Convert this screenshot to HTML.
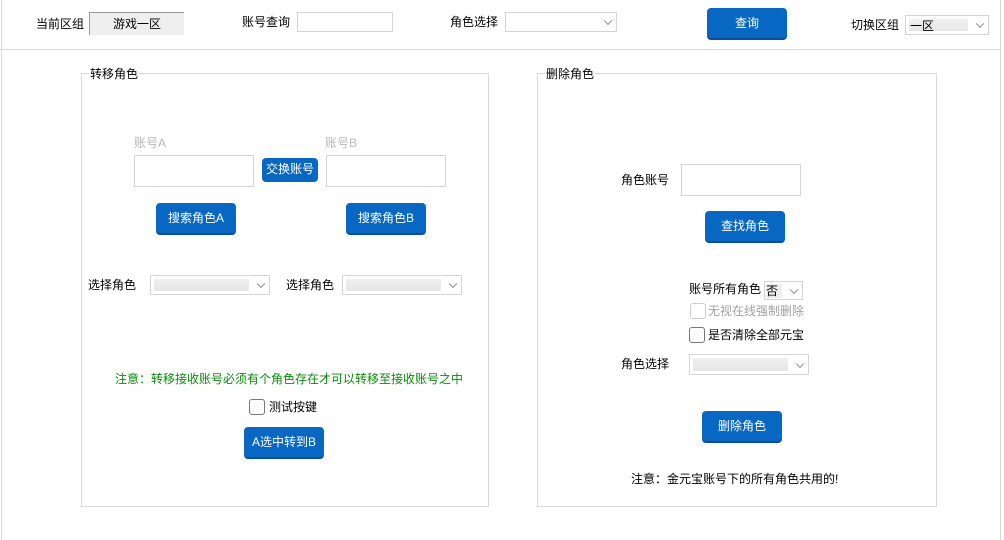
<!DOCTYPE html>
<html><head><meta charset="utf-8"><style>
*{box-sizing:border-box;margin:0;padding:0}
body{width:1004px;height:540px;background:#fff;position:relative;overflow:hidden;font-family:"Liberation Sans","Noto Sans CJK SC",sans-serif;font-size:12px;color:#000}
.a{position:absolute;white-space:nowrap;line-height:16px}
.in{position:absolute;border:1px solid #d4d4d4;background:#fff}
.sel{position:absolute;border:1px solid #d4d4d4;background:#fff}
.sel .f{position:absolute;left:3px;top:3px;bottom:3px;right:20px;background:linear-gradient(#f0f0f0,#e6e6e6)}
.sel .c{position:absolute;right:5px;top:50%;width:6px;height:6px;border-right:1px solid #888;border-bottom:1px solid #888;transform:translateY(-70%) rotate(45deg)}
.btn{position:absolute;background:#0867c2;color:#fff;border-radius:4px;border-bottom:2px solid #0a4f94;text-align:center;font-size:12px}
.grp{position:absolute;border:1px solid #d8d8d8}
.gt{position:absolute;top:-8px;left:-1px;background:#fff;padding:0 1px;line-height:16px;font-size:12px}
.cb{position:absolute;width:16px;height:16px;border:1px solid #777;border-radius:3px;background:#fff}
</style></head><body>
<div style="position:absolute;left:1px;top:0;width:1px;height:540px;background:#d8d8d8"></div>
<div style="position:absolute;left:1000px;top:0;width:1px;height:540px;background:#d8d8d8"></div>
<div style="position:absolute;left:0;top:49px;width:1001px;height:1px;background:#d8d8d8"></div>

<div class="a" style="left:36px;top:16px">当前区组</div>
<div style="position:absolute;left:89px;top:12px;width:95px;height:23px;background:#efefef;border-left:1px solid #999;border-top:1px solid #999;text-align:center;line-height:22px">游戏一区</div>
<div class="a" style="left:242px;top:14px">账号查询</div>
<div class="in" style="left:297px;top:12px;width:96px;height:20px"></div>
<div class="a" style="left:450px;top:14px">角色选择</div>
<div class="sel" style="left:505px;top:12px;width:112px;height:20px"><div class="c"></div></div>
<div class="btn" style="left:707px;top:8px;width:80px;height:32px;line-height:31px">查询</div>
<div class="a" style="left:851px;top:17px">切换区组</div>
<div class="sel" style="left:905px;top:15px;width:84px;height:20px"><div class="f" style="right:20px;line-height:14px;padding-left:1px">一区</div><div class="c"></div></div>

<div class="grp" style="left:81px;top:73px;width:408px;height:434px"><div class="gt" style="left:7px">转移角色</div></div>
<div class="grp" style="left:537px;top:73px;width:400px;height:434px"><div class="gt" style="left:7px">删除角色</div></div>

<div class="a" style="left:134px;top:135px;color:#b8b8b8">账号A</div>
<div class="in" style="left:134px;top:155px;width:120px;height:32px"></div>
<div class="btn" style="left:262px;top:158px;width:56px;height:24px;line-height:23px;border-bottom:none">交换账号</div>
<div class="a" style="left:325px;top:135px;color:#b8b8b8">账号B</div>
<div class="in" style="left:326px;top:155px;width:120px;height:32px"></div>
<div class="btn" style="left:156px;top:203px;width:80px;height:32px;line-height:31px">搜索角色A</div>
<div class="btn" style="left:346px;top:203px;width:80px;height:32px;line-height:31px">搜索角色B</div>
<div class="a" style="left:88px;top:277px">选择角色</div>
<div class="sel" style="left:150px;top:275px;width:120px;height:20px"><div class="f"></div><div class="c"></div></div>
<div class="a" style="left:286px;top:277px">选择角色</div>
<div class="sel" style="left:342px;top:275px;width:120px;height:20px"><div class="f"></div><div class="c"></div></div>
<div class="a" style="left:115px;top:371px;color:#088a08">注意：转移接收账号必须有个角色存在才可以转移至接收账号之中</div>
<div class="cb" style="left:249px;top:399px"></div>
<div class="a" style="left:269px;top:399px">测试按键</div>
<div class="btn" style="left:244px;top:427px;width:80px;height:32px;line-height:31px">A选中转到B</div>

<div class="a" style="left:621px;top:172px">角色账号</div>
<div class="in" style="left:681px;top:164px;width:120px;height:32px"></div>
<div class="btn" style="left:705px;top:211px;width:80px;height:32px;line-height:31px">查找角色</div>
<div class="a" style="left:689px;top:281px">账号所有角色</div>
<div class="sel" style="left:764px;top:281px;width:39px;height:19px"><div style="position:absolute;left:1px;top:2px;width:16px;height:14px;background:#eee;line-height:14px">否</div><div class="c"></div></div>
<div class="cb" style="left:690px;top:303px;border-color:#ccc"></div>
<div class="a" style="left:708px;top:303px;color:#a0a0a0">无视在线强制删除</div>
<div class="cb" style="left:689px;top:327px"></div>
<div class="a" style="left:708px;top:327px">是否清除全部元宝</div>
<div class="a" style="left:621px;top:356px">角色选择</div>
<div class="sel" style="left:689px;top:354px;width:120px;height:21px"><div class="f"></div><div class="c"></div></div>
<div class="btn" style="left:702px;top:411px;width:80px;height:32px;line-height:31px">删除角色</div>
<div class="a" style="left:631px;top:471px">注意：金元宝账号下的所有角色共用的!</div>
</body></html>
